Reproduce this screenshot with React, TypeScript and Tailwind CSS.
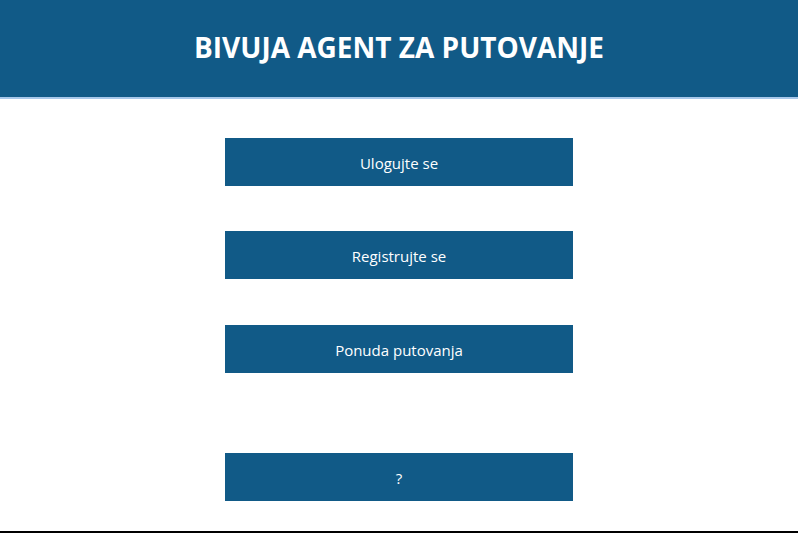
export default function App() {
  const font = { fontFamily: '"Open Sans", "Noto Sans", sans-serif' };
  return (
    <div className="w-[798px] bg-white" style={font}>
      <header className="h-[99px] bg-[#115a87] border-b-2 border-[#a8c8ea] flex justify-center pt-[27px]">
        <h1 className="text-[28px] leading-[40px] font-bold text-white">BIVUJA AGENT ZA PUTOVANJE</h1>
      </header>
      <div className="flex flex-col items-center">
        <button className="mt-[39px] w-[348px] h-[48px] pt-[2px] bg-[#115a87] text-white text-[15px]">Ulogujte se</button>
        <button className="mt-[45px] w-[348px] h-[48px] pt-[2px] bg-[#115a87] text-white text-[15px]">Registrujte se</button>
        <button className="mt-[46px] w-[348px] h-[48px] pt-[2px] bg-[#115a87] text-white text-[15px]">Ponuda putovanja</button>
        <button className="mt-[80px] w-[348px] h-[48px] pt-[2px] bg-[#115a87] text-white text-[15px]">?</button>
      </div>
      <div className="mt-[30px] h-[2px] bg-black" />
    </div>
  );
}
